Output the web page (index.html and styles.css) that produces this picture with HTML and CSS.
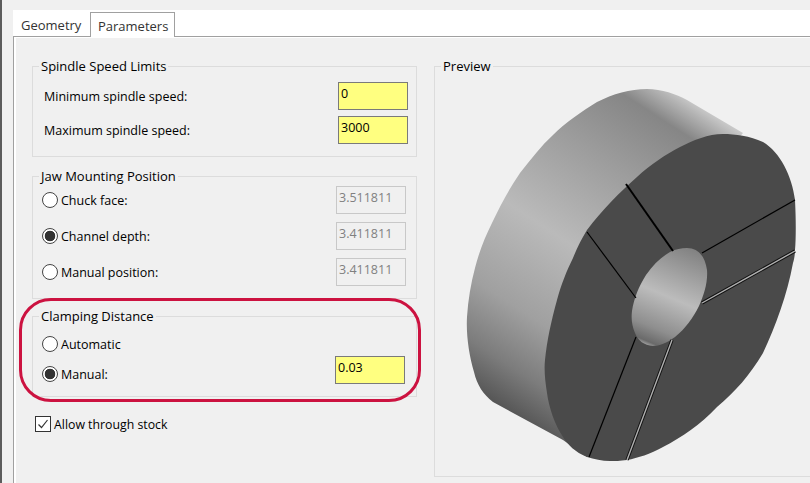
FILE: index.html
```html
<!DOCTYPE html>
<html lang="en">
<head>
    <meta charset="UTF-8">
    <title>Parameters</title>
    <link rel="stylesheet" href="styles.css">
</head>
<body>

<div class="tabbar">
    <div class="tab">Geometry</div>
    <div class="tab active">Parameters</div>
</div>

<div class="panel">
    <div class="left">
        <fieldset class="group speed">
            <legend>Spindle Speed Limits</legend>
            <div class="row"><span>Minimum spindle speed:</span><input class="req" type="text" value="0"></div>
            <div class="row"><span>Maximum spindle speed:</span><input class="req" type="text" value="3000"></div>
        </fieldset>

        <fieldset class="group jaw">
            <legend>Jaw Mounting Position</legend>
            <div class="row"><label class="opt"><i class="radio"></i>Chuck face:</label><input type="text" value="3.511811" disabled></div>
            <div class="row"><label class="opt"><i class="radio on"></i>Channel depth:</label><input type="text" value="3.411811" disabled></div>
            <div class="row"><label class="opt"><i class="radio"></i>Manual position:</label><input type="text" value="3.411811" disabled></div>
        </fieldset>

        <fieldset class="group clamp">
            <legend>Clamping Distance</legend>
            <div class="row auto"><label class="opt"><i class="radio"></i>Automatic</label></div>
            <div class="row"><label class="opt low"><i class="radio on"></i>Manual:</label><input class="req" type="text" value="0.03"></div>
        </fieldset>

        <label class="allow">
            <i class="check"><svg width="14" height="14" viewBox="0 0 14 14"><path d="M2.5 7.5 5.5 10.5 11.5 3" fill="none" stroke="#333" stroke-width="1.2"/></svg></i>
            Allow through stock
        </label>

        <div class="callout"></div>
    </div>

    <fieldset class="group preview">
        <legend>Preview</legend>
        <svg width="375" height="400" viewBox="435 74 375 400">
            <defs>
                <linearGradient id="side" gradientUnits="userSpaceOnUse" x1="700" y1="95" x2="495" y2="410">
                    <stop offset="0" stop-color="#dedede"/>
                    <stop offset="0.05" stop-color="#b4b4b4"/>
                    <stop offset="0.11" stop-color="#868686"/>
                    <stop offset="0.28" stop-color="#9c9c9c"/>
                    <stop offset="0.52" stop-color="#bababa"/>
                    <stop offset="0.74" stop-color="#a0a0a0"/>
                    <stop offset="0.88" stop-color="#7c7c7c"/>
                    <stop offset="1" stop-color="#505050"/>
                </linearGradient>
                <linearGradient id="bore" gradientUnits="userSpaceOnUse" x1="692" y1="245" x2="648" y2="350">
                    <stop offset="0" stop-color="#7e7e7e"/>
                    <stop offset="0.5" stop-color="#bcbcbc"/>
                    <stop offset="0.8" stop-color="#8e8e8e"/>
                    <stop offset="0.93" stop-color="#6a6a6a"/>
                    <stop offset="1" stop-color="#dcdcdc"/>
                </linearGradient>
            </defs>
            <path fill="url(#side)" d="M647 89 C662 89 676 94 687 100 L743 133 L600 300 L587 457 L563 440 L493 402 C483 394 477 385 474 372 C469 355 466 335 467 317 C468 300 471 283 475 268 C479 252 485 237 492 223 C500 206 509 189 520 173 C531 159 541 146 553 135 C566 122 581 112 597 102 C613 94 630 89 647 89Z"/>
            <path fill="#4a4a4a" d="M723 134 C735 134 750 136 763 142 C780 152 792 176 795 200 C796 220 796 238 795 250 C795 255 794 260 793 263 C787 295 776 325 763 353 C750 375 735 392 717 407 C700 425 682 437 663 447 C650 454 638 458 627 460 C620 461 615 461 610 461 C602 461 594 459 587 457 C575 452 568 445 563 437 C555 425 549 408 547 393 C545 380 544 370 545 360 C547 340 551 322 557 300 C561 285 567 270 573 258 C577 248 582 238 587 230 C603 209 620 192 637 177 C651 164 665 155 680 147 C694 140 708 134 723 134Z"/>
            <path fill="url(#bore)" d="M687 248 C698 248 705 256 707 270 C708 282 704 295 699 306 C693 318 685 329 675 337 C667 343 659 346 653 346 C644 345 638 341 635 333 C632 326 631 319 632 311 C634 298 639 286 646 275 C653 265 661 257 670 252 C676 249 681 248 687 248Z"/>
            <g fill="none" stroke="#000">
                <path stroke-width="2" d="M626 184 673 251"/>
                <path stroke-width="1.2" d="M587 232 636 298"/>
                <path stroke-width="1.2" d="M702 253 795 200"/>
                <path stroke-width="1.2" d="M636 337 589 457"/>
                <path stroke-width="3.4" stroke="#111" d="M795 251 702 303"/>
                <path stroke-width="1.4" stroke="#b0b0b0" d="M795 251 702 303"/>
                <path stroke-width="3.4" stroke="#111" d="M672 340 627 460"/>
                <path stroke-width="1.4" stroke="#b0b0b0" d="M672 340 627 460"/>
            </g>
        </svg>
    </fieldset>
</div>

</body>
</html>
```

FILE: styles.css
```css
html, body { height: 100%; }
body { margin: 0; background: #f0f0f0; border-left: 2px solid #5c5c5c; padding: 10px 0 0 11px; box-sizing: border-box; overflow: hidden; font-family: "Open Sans", sans-serif; font-size: 12.5px; color: #000; }

.tabbar { display: flex; height: 26px; background: #fff; padding-left: 1px; box-sizing: border-box; }
.tab { padding: 7px 7px 0; font-size: 13px; line-height: 16px; color: #333; width: 76px; box-sizing: border-box; }
.tab.active { width: 85px; margin-top: 2px; height: 25px; padding-top: 5px; background: #fff; border: 1px solid #a0a0a0; border-bottom: 0; position: relative; z-index: 1; }

.panel { display: flex; align-items: flex-start; gap: 17px; height: 447px; padding: 22px 0 0 18px; box-sizing: border-box; border-top: 1px solid #a0a0a0; border-left: 1px solid #a0a0a0; box-shadow: inset 1px 1px 0 #fff, inset 2px 0 0 #fff; }

.left { position: relative; width: 385px; flex: none; }

.group { border: 1px solid #dcdcdc; margin: 0; padding: 0; min-width: 0; }
.group legend { padding: 0 2px; line-height: 15px; font-size: 13px; }

.row { display: flex; justify-content: space-between; align-items: center; }
.row input { width: 70px; height: 28px; box-sizing: border-box; padding: 0 2px 5px; border: 1px solid #c8c8c8; background: #f0f0f0; color: #808080; font: inherit; border-radius: 0; outline: 0; }
.row input.req { background: #ffff80; border-color: #7a7a7a; color: #000; }

.speed { padding: 8px 8px 12px 11px; }
.speed legend { margin-left: -5px; }
.speed .row + .row { margin-top: 6px; }

.jaw { margin-top: 12px; padding: 2px 10px 12px 9px; }
.jaw legend { margin-left: -3px; }
.jaw .row + .row { margin-top: 8px; }

.clamp { margin-top: 10px; padding: 10px 11px 12px 9px; }
.clamp legend { margin-left: -3px; }
.clamp .auto { height: 20px; margin-bottom: 2px; }
.low { align-self: flex-end; height: 20px; }

.opt { display: flex; align-items: center; gap: 3px; }
.radio { width: 16px; height: 16px; box-sizing: border-box; border: 1px solid #444; border-radius: 50%; background: #fff; flex: none; }
.radio.on { background: radial-gradient(circle, #333 0 5px, #fff 5.6px); }

.allow { display: flex; align-items: center; gap: 3px; height: 20px; margin: 17px 0 0 3px; font-size: 12.3px; }
.check { width: 16px; height: 16px; box-sizing: border-box; border: 1px solid #333; background: #fff; display: flex; align-items: center; justify-content: center; }

.callout { position: absolute; left: -13px; top: 239px; width: 402px; height: 104px; box-sizing: border-box; border: 3px solid #cc1240; border-radius: 32px; }

.preview { flex: 1; border-right: 0; padding-bottom: 2px; }
.preview legend { margin-left: 6px; }
.preview svg { display: block; }
```
